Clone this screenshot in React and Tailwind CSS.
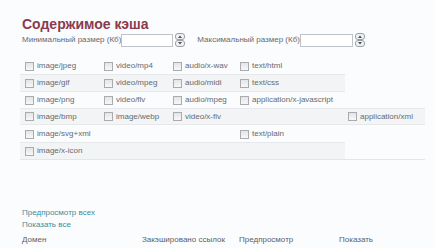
import React from 'react';

const rows = [
  ['image/jpeg', 'video/mp4', 'audio/x-wav', 'text/html', null],
  ['image/gif', 'video/mpeg', 'audio/midi', 'text/css', null],
  ['image/png', 'video/flv', 'audio/mpeg', 'application/x-javascript', null],
  ['image/bmp', 'image/webp', 'video/x-flv', null, 'application/xml'],
  ['image/svg+xml', null, null, 'text/plain', null],
  ['image/x-icon', null, null, null, null],
];

const widths = ['w-[79px]', 'w-[69px]', 'w-[67px]', 'w-[108px]', 'w-[82px]'];

const Box = () => (
  <span className="inline-block w-[9px] h-[9px] border border-[#a9abae] bg-gradient-to-b from-[#e4e5e7] to-[#f7f7f8] shrink-0" />
);

const Spinner = () => (
  <svg width="10" height="14" viewBox="0 0 10 14" className="ml-[2px]">
    <rect x="0.5" y="0.5" width="9" height="6" rx="2.5" fill="#f1f2f4" stroke="#9a9da3" />
    <rect x="0.5" y="7.5" width="9" height="6" rx="2.5" fill="#f1f2f4" stroke="#9a9da3" />
    <path d="M3 5 L5 2.5 L7 5 Z" fill="#4a4d52" />
    <path d="M3 9 L5 11.5 L7 9 Z" fill="#4a4d52" />
  </svg>
);

const Cell = ({ label, w }) => (
  <div className={`${w} flex items-center gap-[3px] pl-[5px] h-full`}>
    {label && (
      <>
        <Box />
        <span>{label}</span>
      </>
    )}
  </div>
);

const App = () => {
  return (
    <div className="w-[434px] h-[248px] bg-[#fbfcfd] overflow-hidden text-[8px] text-[#666a70]" style={{ fontFamily: '"Liberation Sans", Arial, sans-serif' }}>
      <div className="pl-[22px] pt-[16px]">
        <h1 className="text-[14px] font-bold leading-[16px] text-[#8a3a4c]">Содержимое кэша</h1>

        {/* size filters */}
        <div className="flex items-center mt-[1px] h-[14px]">
          <span>Минимальный размер (Кб)</span>
          <span className="w-[52px] h-[13px] border border-[#bfc2c6] bg-white" />
          <Spinner />
          <span className="ml-[12px]">Максимальный размер (Кб)</span>
          <span className="w-[53px] h-[13px] border border-[#bfc2c6] bg-white" />
          <Spinner />
        </div>

        {/* types */}
        <div className="mt-[11px] -ml-[2px]">
          {rows.map((r, i) => {
            const odd = i % 2 === 1;
            const wide = i === 3;
            const last = i === rows.length - 1;
            return (
              <div key={i} className={`flex h-[17px] ${last ? 'w-[405px] border-b border-[#e3e5e8]' : ''}`}>
                <div className={`flex w-[325px] h-full border-b border-[#e6e8eb] ${odd ? 'bg-[#f3f4f6]' : ''} ${wide ? 'w-[405px] border-t -mt-[1px] h-[18px]' : ''} ${last ? 'border-b-0' : ''}`}>
                  {r.slice(0, wide ? 5 : 4).map((label, j) => (
                    <Cell key={j} label={label} w={widths[j]} />
                  ))}
                </div>
              </div>
            );
          })}
        </div>

        {/* links */}
        <div className="mt-[47px] flex flex-col leading-[12px] text-[#3b8e9b]">
          <span>Предпросмотр всех</span>
          <span>Показать все</span>
        </div>

        <div className="flex mt-[3px] leading-[12px] text-[#5c6066]">
          <span className="w-[120px]">Домен</span>
          <span className="w-[97px]">Закэшировано ссылок</span>
          <span className="w-[100px]">Предпросмотр</span>
          <span>Показать</span>
        </div>
      </div>
    </div>
  );
};

export default App;
